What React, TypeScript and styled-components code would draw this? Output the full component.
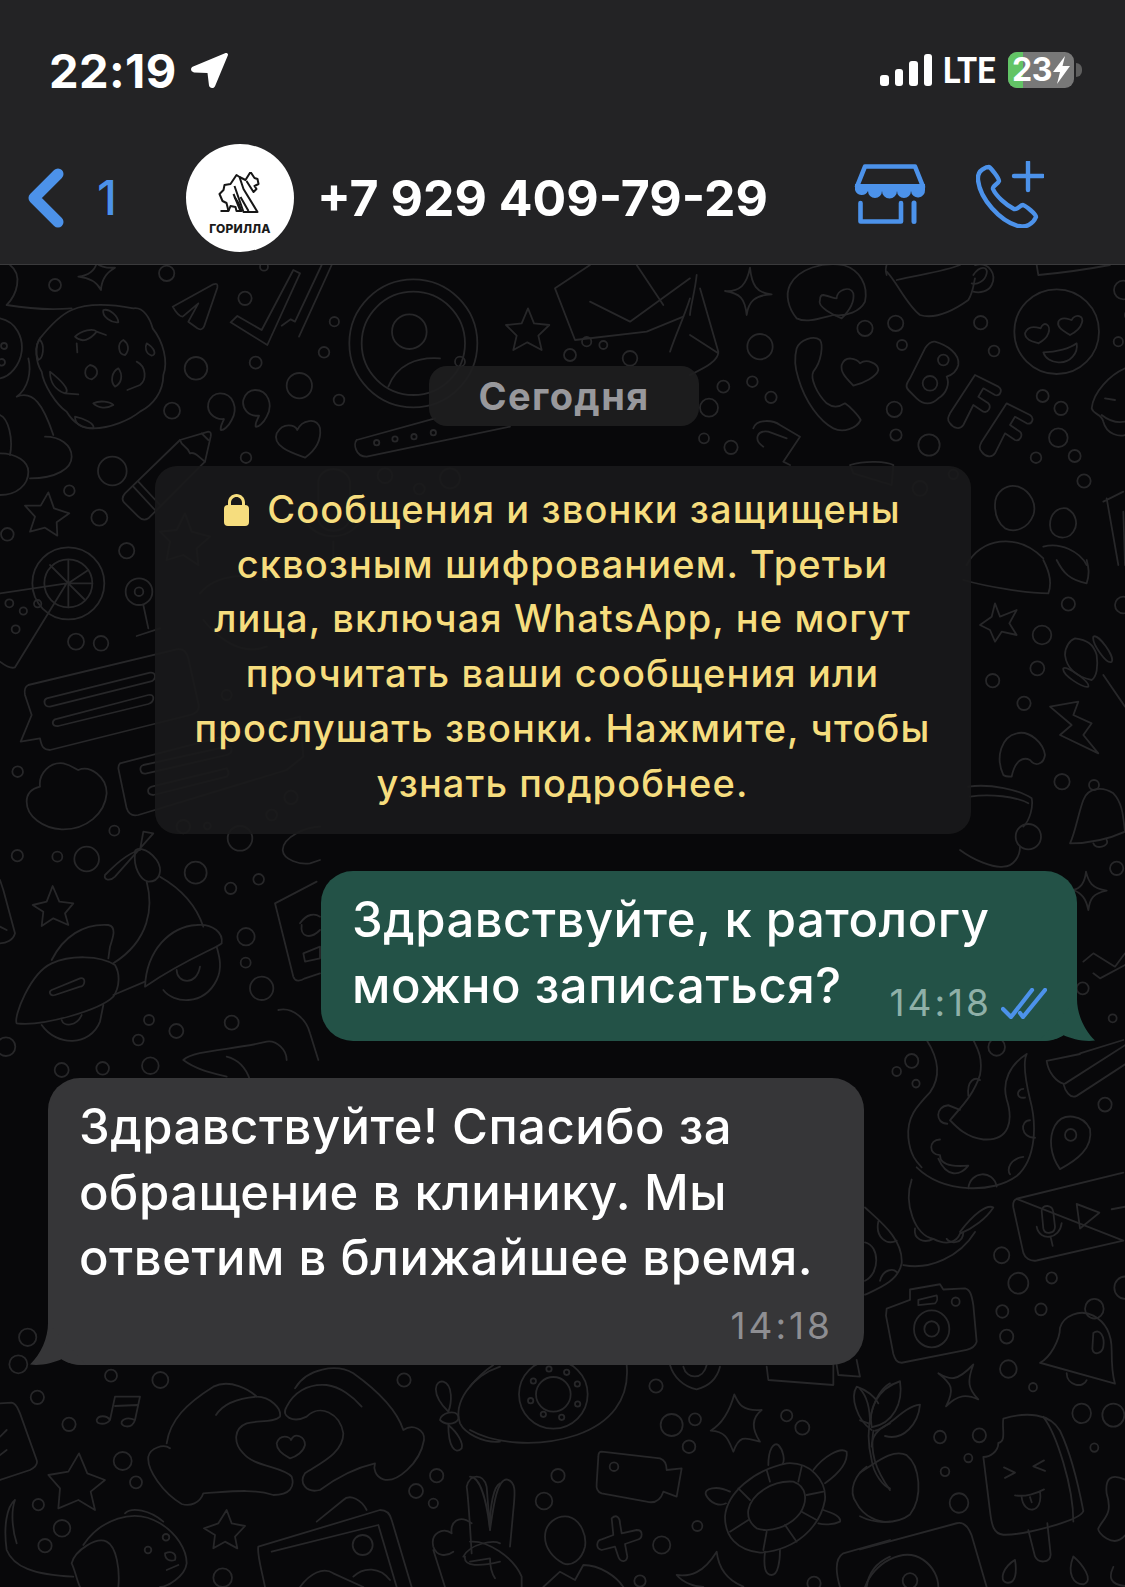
import React from "react";
import styled, { createGlobalStyle } from "styled-components";

const GlobalStyle = createGlobalStyle`
  html, body { margin: 0; padding: 0; background: #08080a; }
  body { font-family: Inter, "Noto Sans", sans-serif; }
`;

const BLUE = "#4c92ea";

const Page = styled.div`
  position: relative;
  width: 1125px;
  height: 1587px;
  overflow: hidden;
  display: flex;
  flex-direction: column;
  background: #08080a;
`;

const Header = styled.header`
  position: relative;
  z-index: 1;
  flex: none;
  height: 265px;
  box-sizing: border-box;
  background: #232325;
  border-bottom: 1px solid #3a3a3c;
`;

const StatusBar = styled.div`
  height: 140px;
  box-sizing: border-box;
  padding: 0 43px 0 49px;
  display: flex;
  align-items: center;
  justify-content: space-between;
`;

const TimeGroup = styled.div`
  display: flex;
  align-items: center;
  gap: 14px;
`;

const Clock = styled.span`
  font-size: 47px;
  font-weight: 700;
  color: #fff;
  line-height: 1;
  letter-spacing: 0.4px;
`;

const StatusIcons = styled.div`
  display: flex;
  align-items: center;
`;

const Signal = styled.div`
  display: flex;
  align-items: flex-end;
  gap: 6px;
  height: 32px;
  margin-left: 2px;
`;

const SignalBar = styled.span<{ $h: number }>`
  width: 8.5px;
  height: ${(p) => p.$h}px;
  border-radius: 3px;
  background: #fff;
`;

const Network = styled.span`
  width: 56px;
  margin-left: 11px;
  font-family: Roboto, sans-serif;
  font-size: 37px;
  font-weight: 700;
  color: #fff;
  line-height: 1;
  transform: scaleX(0.88);
  transform-origin: left center;
  white-space: nowrap;
`;

const Battery = styled.div`
  position: relative;
  width: 66px;
  height: 36px;
  margin-left: 9px;
  border-radius: 9px;
  background: #787878;
  display: flex;
  align-items: center;
  justify-content: center;
  gap: 1px;
`;

const BatteryFill = styled.span`
  position: absolute;
  left: 0;
  top: 0;
  bottom: 0;
  width: 15px;
  border-radius: 9px 0 0 9px;
  background: #62c466;
`;

const BatteryText = styled.span`
  position: relative;
  font-size: 32px;
  font-weight: 700;
  color: #fff;
  line-height: 1;
  letter-spacing: -0.5px;
`;

const BatteryNub = styled.span`
  width: 6px;
  height: 14px;
  margin-left: 2px;
  border-radius: 0 6px 6px 0;
  background: #5e5e5e;
`;

const NavBar = styled.div`
  height: 116px;
  box-sizing: border-box;
  padding: 0 81px 0 28px;
  display: flex;
  align-items: center;
`;

const BackCount = styled.span`
  margin-left: 33px;
  width: 55px;
  font-size: 48px;
  font-weight: 500;
  color: ${BLUE};
  line-height: 1;
`;

const Avatar = styled.div`
  flex: none;
  width: 108px;
  height: 108px;
  margin-left: 34px;
  border-radius: 50%;
  background: #fff;
  display: flex;
  flex-direction: column;
  align-items: center;
  justify-content: center;
  padding-top: 11px;
  box-sizing: border-box;
`;

const AvatarLabel = styled.span`
  margin-top: 10px;
  font-size: 12px;
  font-weight: 800;
  color: #1a1a1a;
  line-height: 1;
  letter-spacing: 0.2px;
`;

const Title = styled.span`
  margin-left: 23px;
  font-size: 50px;
  font-weight: 700;
  color: #fff;
  line-height: 1;
  white-space: nowrap;
`;

const NavActions = styled.div`
  margin-left: auto;
  margin-top: -8px;
  display: flex;
  align-items: center;
  gap: 50px;
`;

const Wallpaper = styled.svg`
  position: absolute;
  left: 0;
  top: 0;
  width: 1125px;
  height: 1587px;
  fill: none;
  stroke: #272729;
  stroke-width: 5.4;
  stroke-linecap: round;
  stroke-linejoin: round;
`;

const Chat = styled.main`
  position: relative;
  flex: 1;
  display: flex;
  flex-direction: column;
  padding: 101px 48px 0;
`;

const DatePill = styled.div`
  align-self: center;
  width: 270px;
  height: 60px;
  margin-left: 3px;
  border-radius: 18px;
  background: rgba(30, 30, 32, 0.92);
  display: flex;
  align-items: center;
  justify-content: center;
  font-size: 38px;
  font-weight: 700;
  letter-spacing: 1.4px;
  color: #98989c;
`;

const SystemNotice = styled.div`
  align-self: center;
  width: 816px;
  box-sizing: border-box;
  margin-top: 40px;
  padding: 16px 0 24px;
  border-radius: 22px;
  background: rgba(26, 26, 27, 0.9);
  text-align: center;
  color: #f6dd7e;
  font-size: 38px;
  font-weight: 500;
  letter-spacing: 1.1px;
  line-height: 54.7px;
`;

const NoticeLine = styled.div`
  white-space: nowrap;
`;

const LockIcon = styled.svg`
  width: 25px;
  height: 33px;
  margin-right: 18px;
  vertical-align: -3px;
  fill: #f6dd7e;
`;

const Bubble = styled.div<{ $out?: boolean }>`
  position: relative;
  box-sizing: border-box;
  width: ${(p) => (p.$out ? 756 : 816)}px;
  margin-top: 37px;
  align-self: ${(p) => (p.$out ? "flex-end" : "flex-start")};
  padding: ${(p) => (p.$out ? "16px 30px 23px 31px" : "16px 31px 21px 31px")};
  border-radius: 32px;
  background: ${(p) => (p.$out ? "#235247" : "#363638")};
  color: #fff;
  font-size: 49px;
  font-weight: 500;
  letter-spacing: 0.5px;
  line-height: 65.5px;
`;

const MessageLine = styled.div`
  white-space: nowrap;
`;

const LastLine = styled.div`
  display: flex;
  justify-content: space-between;
  align-items: flex-end;
  white-space: nowrap;
`;

const Meta = styled.div<{ $out?: boolean }>`
  display: flex;
  align-items: center;
  justify-content: flex-end;
  gap: 9px;
  font-size: 37px;
  font-weight: 400;
  line-height: 36px;
  letter-spacing: 3px;
  color: ${(p) => (p.$out ? "#8fb0a8" : "#8e8e92")};
`;

const InMeta = styled(Meta)`
  margin-top: 17px;
`;

const OutMeta = styled(Meta)`
  margin-bottom: -3px;
`;

const Tail = styled.svg<{ $out?: boolean }>`
  position: absolute;
  bottom: 0;
  width: 56px;
  height: 42px;
  ${(p) => (p.$out ? "right: -18px;" : "left: -18px;")}
  fill: ${(p) => (p.$out ? "#235247" : "#363638")};
`;

type Region = {
  x: number;
  y: number;
  sy?: number;
  c: number[][];
  p: string[];
};

const regions: Region[] = [
  {
    x: 0,
    y: 265,
    c: [
      [165, 60, 18], [500, 25, 23], [735, 100, 20], [1003, 170, 14], [972, 262, 16], [767, 293, 18],
      [588, 310, 34], [898, 362, 38], [1017, 405, 16], [516, 437, 24], [738, 578, 16], [337, 618, 43],
      [208, 677, 16], [298, 758, 24], [22, 808, 19], [380, 857, 23], [792, 5, 12], [1240, 235, 192],
      [1240, 235, 155], [1228, 200, 52], [12, 243, 9], [5, 292, 10], [1130, 533, 8], [1185, 522, 8],
      [1242, 515, 8], [1300, 503, 8], [1155, 632, 22], [1258, 672, 16], [1350, 640, 30],
    ],
    p: [
      "M235 35Q280 30 290 -5Q305 10 345 8Q305 30 303 75Q285 40 235 35Z",
      "M215 135C260 115 320 115 400 130C430 125 450 160 458 190C490 230 505 290 490 330C490 380 460 420 420 440C390 465 330 490 280 490C240 490 215 465 200 440C170 420 130 360 125 320C105 290 105 240 120 220C140 195 180 150 215 135Z",
      "M310 135C330 130 355 155 355 172C335 175 305 155 310 135Z",
      "M225 215C245 195 280 190 290 200C270 225 245 235 225 215ZM230 235L232 262M290 200L318 210",
      "M370 225C385 235 390 255 375 270C355 270 350 235 370 225Z",
      "M440 235C465 250 470 270 455 272C435 265 435 245 440 235Z",
      "M270 300C295 305 300 330 275 343C250 340 250 310 270 300Z",
      "M355 310C370 330 365 355 345 365C330 350 335 320 355 310Z",
      "M410 290C440 305 440 345 420 360L382 375",
      "M150 320C175 340 215 375 195 385C165 375 150 350 150 320ZM195 385L235 388",
      "M280 415C300 405 330 410 340 420C320 432 295 430 280 415Z",
      "M225 455C250 460 285 475 280 490C250 490 225 480 225 455Z",
      "M120 225C135 240 130 280 115 285C105 265 108 240 120 220",
      "M20 120C80 130 160 135 215 130",
      "M30 0C70 30 50 90 20 120",
      "M85 280C95 320 85 370 50 395C100 375 130 420 160 510",
      "M135 515C180 515 215 540 215 575C215 610 170 640 90 640",
      "M0 690C50 690 85 660 85 620C85 590 50 565 0 565",
      "M0 450C25 460 40 520 30 570",
      "M0 160C50 170 70 220 65 260C60 300 30 335 0 340",
      "M518 125L640 58Q655 52 652 68L612 185Q605 198 592 190L565 170L595 115L548 155Q535 155 518 125Z",
      "M692 172L712 153L785 195L880 15L900 25L802 240Z",
      "M845 182L872 163L885 170L965 0M995 0L897 215Z",
      "M660 385C700 385 715 430 695 465C685 485 670 497 662 495C660 480 670 470 672 462C640 465 620 440 625 415C630 395 645 385 660 385Z",
      "M765 375C805 375 820 420 800 455C790 475 775 487 767 485C765 470 775 460 777 452C745 455 725 430 730 405C735 385 750 375 765 375Z",
      "M830 505C850 470 885 480 892 495C905 465 950 455 960 490C965 530 940 560 915 578C880 565 815 545 830 505Z",
      "M1165 365C1190 300 1250 275 1320 280",
      "M1070 525L1305 460M1530 485L1100 575C1065 575 1060 535 1070 525",
      "M540 525L625 500Q635 500 632 515L615 590L445 760Q430 770 415 755L372 712Q362 700 375 685Z",
      "M540 525C545 545 560 540 570 565C585 560 595 575 615 590M605 505L625 525M400 665L465 735M415 650L480 720",
      "M145 682L162 730L208 745L170 772L172 812L135 788L90 800L105 755L75 722L122 722Z",
      "M555 745L575 800L630 815L590 850L595 900L550 870L500 885L510 830L480 800L530 795Z",
      "M955 650C960 600 1040 600 1050 650L1050 760C1040 810 960 810 955 760ZM900 720C910 840 1080 850 1100 720M1000 830L1000 900",
    ],
  },
  {
    x: 430,
    y: 265,
    c: [[420, 270, 18], [470, 230, 14], [90, 290, 15], [600, 280, 22], [520, 240, 12]],
    p: [
      "M294 130L312 175L358 180L325 212L335 255L292 232L250 255L260 212L228 180L275 175Z",
      "M375 70L480 0M375 70L435 225L650 200L760 155M480 110L600 170L780 40M620 0L700 120",
      "M780 100C765 150 740 200 720 260",
    ],
  },
  {
    x: 690,
    y: 265,
    c: [
      [210, 245, 38], [525, 190, 23], [617, 175, 23], [636, 240, 15], [872, 173, 20], [912, 258, 16],
      [1285, 230, 14], [100, 365, 18], [187, 350, 16], [243, 397, 17], [57, 428, 27], [42, 520, 15],
      [123, 547, 20], [613, 433, 23], [618, 510, 17], [717, 540, 32], [1058, 393, 18], [1113, 430, 20],
      [1105, 518, 28], [1038, 578, 16], [1154, 573, 18], [1182, 648, 20], [760, 285, 16], [720, 355, 22],
      [790, 628, 14], [690, 670, 22], [1100, 200, 127], [1300, 75, 28], [1320, 150, 15],
    ],
    p: [
      "M105 78C150 80 170 60 180 8C185 60 200 85 245 88C195 90 175 110 170 150C165 100 150 85 105 78Z",
      "M320 160C295 130 285 90 300 60C325 10 400 -10 460 0C510 15 535 60 525 110C510 140 470 155 430 150C390 160 350 175 320 160Z",
      "M400 90C425 95 430 100 440 100C440 75 480 60 490 85C495 115 475 140 455 160C430 150 380 125 390 105C390 95 395 90 400 90Z",
      "M590 20C620 50 650 120 690 150C740 165 800 130 835 105C850 80 850 60 855 40",
      "M590 30C580 0 600 -20 620 -30M620 45C680 30 760 20 810 0",
      "M855 0C900 -10 920 30 905 60C895 80 870 85 850 80M850 30C870 0 895 5 890 25C885 50 860 60 845 55",
      "M1005 205C1015 175 1050 190 1052 190C1060 165 1085 180 1075 205C1070 220 1055 230 1045 235C1030 230 1005 225 1005 205Z",
      "M1105 170C1115 150 1140 165 1145 165C1155 145 1185 150 1175 175C1170 195 1150 205 1140 210C1125 200 1100 190 1105 170Z",
      "M1060 262C1100 262 1140 250 1160 235C1165 265 1140 295 1105 292C1085 292 1065 280 1060 262Z",
      "M320 250C330 225 370 210 390 225C400 240 395 290 370 320C360 340 380 385 410 415C430 430 450 425 465 415C480 425 505 450 512 465C500 490 460 505 430 490C390 470 345 410 325 340C315 310 312 280 320 250Z",
      "M455 300C465 270 500 280 510 295C530 280 565 295 565 315C560 335 520 355 490 362C475 345 450 325 455 300Z",
      "M735 230C770 240 810 265 805 300C800 320 785 330 770 335C780 355 770 385 745 400C725 420 700 420 680 400L655 375C645 365 650 355 660 340L705 250C715 235 725 228 735 230Z",
      "M855 330L925 365C940 375 930 395 915 390L880 370L865 395L895 415C905 425 895 445 880 440L850 420L820 480C810 495 790 490 780 475C770 465 775 455 780 445Z",
      "M950 415L1020 450C1035 460 1025 480 1010 475L975 455L960 480L990 500C1000 510 990 530 975 525L945 505L915 565C905 580 885 575 875 560C865 550 870 540 875 530Z",
      "M1305 310C1260 330 1210 380 1205 430C1210 450 1235 445 1240 470C1250 510 1290 515 1305 510M1245 400L1275 405M1235 450C1260 470 1280 475 1305 470",
      "M20 30C15 80 0 130 0 150M30 70L85 260C85 290 40 310 0 330M0 210L85 265",
      "M190 490C200 460 250 465 270 480L330 515L280 590L300 600M235 500L290 520M220 545C190 525 200 495 235 500",
      "M915 720C915 680 950 655 985 665C1025 680 1040 720 1030 750C1015 790 975 805 945 790C925 775 915 750 915 720Z",
      "M1080 780C1080 745 1105 725 1130 730C1160 745 1165 780 1150 800C1130 830 1080 820 1080 780Z",
      "M830 900C870 820 980 800 1060 880M1060 845C1110 830 1170 860 1190 900",
      "M1250 700L1285 900M1240 710L1300 680M1300 740L1305 900",
      "M1040 0L1045 30C1100 25 1180 15 1260 0",
      "M480 600C530 585 590 590 610 600L605 660L490 625Z",
    ],
  },
  {
    x: 960,
    y: 560,
    c: [
      [325, 132, 20], [246, 225, 28], [232, 325, 21], [98, 362, 20], [192, 430, 20], [306, 665, 23],
      [402, 675, 15], [470, 925, 20], [205, 830, 38], [490, 135, 25], [368, 1285, 18], [458, 1375, 12],
    ],
    p: [
      "M10 60C80 80 200 100 265 100C280 60 260 20 250 0M290 0C310 40 330 60 380 70C390 40 385 20 380 0",
      "M105 130L120 170L170 150L148 190L170 225L125 215L105 245L90 210L60 195L95 170Z",
      "M345 235C380 240 400 250 410 285C415 320 410 350 395 360C350 350 320 325 315 285C315 260 330 240 345 235Z",
      "M400 230C415 220 465 290 455 305C440 315 395 250 400 230ZM310 325C320 315 390 365 385 380C370 385 305 345 310 325ZM430 345L495 440",
      "M270 440L355 425L340 465L395 490L370 525L415 580L300 525L335 495Z",
      "M130 645C105 590 125 530 170 520C210 510 250 550 255 585C250 615 225 620 210 600C190 590 165 600 155 650C145 650 135 650 130 645Z",
      "M25 680C90 670 180 690 215 715C220 740 210 780 190 800M30 710C90 700 170 710 205 730",
      "M0 870C40 900 100 925 130 920C160 920 180 890 180 860",
      "M330 850C345 820 355 760 370 720C385 680 430 680 460 700C490 730 490 780 495 815C440 840 380 850 330 850ZM400 850C405 870 450 860 440 840",
      "M340 990C365 985 375 965 378 935C385 965 395 985 440 992C400 1000 390 1015 385 1050C378 1015 365 1000 340 990Z",
      "M370 1205L400 1180L465 1220L495 1180M400 1240L420 1255L495 1215",
      "M490 1440L360 1480",
    ],
  },
  {
    x: 0,
    y: 560,
    c: [
      [417, 95, 40], [417, 95, 13], [228, 245, 24], [303, 250, 22], [53, 635, 16], [52, 887, 17], [172, 890, 15],
      [260, 897, 37], [343, 812, 15], [587, 938, 33], [692, 985, 17], [776, 958, 16], [738, 1130, 26],
      [737, 1208, 15], [785, 1285, 35], [695, 1388, 21], [447, 1380, 15], [529, 1413, 21], [415, 1440, 16],
      [18, 1460, 28], [185, 1530, 21], [308, 1525, 19], [451, 1517, 25], [720, 835, 37], [550, 800, 20],
      [622, 798, 10], [815, 765, 16], [873, 712, 20], [680, 405, 15], [205, 70, 108], [205, 70, 72],
      [28, 130, 12], [70, 153, 11], [113, 131, 11], [47, 208, 12],
    ],
    p: [
      "M0 100L200 70L45 322Q30 328 0 305",
      "M205 70L205 0M205 70L265 30M205 70L277 70M205 70L255 120M205 70L205 142M205 70L150 15",
      "M430 135L445 205M410 228L480 205",
      "M85 375L530 268C550 265 560 275 565 295L595 430C600 450 590 460 570 465L150 570C130 570 125 560 120 535L62 545L95 465L75 405C72 390 75 380 85 375Z",
      "M140 415L450 338C470 335 470 360 450 365L150 440C130 440 130 420 140 415Z",
      "M165 478L445 405C465 400 465 425 445 432L175 498C155 500 155 485 165 478Z",
      "M360 610L900 470L910 590L860 630L415 765C395 770 385 760 380 745L355 625C355 615 358 612 360 610Z",
      "M430 615L680 560C700 555 700 580 680 585L440 640C420 645 415 620 430 615Z",
      "M455 680L680 625C690 640 685 645 680 650L460 705C440 705 440 685 455 680Z",
      "M120 680C115 640 150 605 190 610C215 615 230 630 235 630C270 615 320 650 320 700C315 760 260 810 185 808C130 805 80 770 80 725C80 695 100 685 120 680Z",
      "M420 870C380 880 340 920 315 945C310 960 330 965 345 950L460 820L430 815Z",
      "M405 880C400 860 440 860 470 900C490 930 480 965 445 965C420 960 400 920 405 880Z",
      "M480 950C550 990 590 1040 610 1100",
      "M440 965C460 1040 450 1140 340 1210",
      "M435 1280C440 1170 510 1100 590 1095C640 1090 670 1120 665 1150C650 1165 560 1195 435 1280Z",
      "M490 1290C520 1330 610 1340 650 1260C670 1220 655 1180 650 1160",
      "M530 1230C530 1270 590 1280 600 1220",
      "M155 1200C190 1130 250 1090 325 1095C350 1100 340 1130 330 1160L325 1195",
      "M50 1390C40 1370 90 1240 155 1210C210 1185 300 1185 345 1215C360 1240 360 1280 340 1310C300 1350 130 1400 50 1390Z",
      "M155 1290L240 1255C260 1250 255 1280 240 1280L165 1305C150 1310 145 1295 155 1290Z",
      "M340 1305L435 1265",
      "M125 1395C170 1460 270 1460 300 1385L310 1335",
      "M185 1380C190 1400 230 1400 245 1365",
      "M158 978L178 1025L220 1030L195 1060L205 1095L160 1075L125 1098L130 1055L98 1035L140 1025Z",
      "M825 1030L950 965M825 1030L880 1250C885 1265 900 1265 915 1255L960 1240",
      "M900 1090C920 1060 945 1060 960 1070M905 1095C900 1130 930 1140 960 1110M910 1180L960 1160L960 1195L915 1205Z",
      "M0 960L10 990L45 1120C40 1140 20 1150 0 1150M0 1100L20 1110",
      "M835 1350C880 1340 920 1380 930 1420L955 1500",
      "M550 1500C580 1470 700 1470 800 1445C830 1440 860 1470 860 1500M550 1500C590 1530 640 1540 680 1550M680 1490C720 1500 740 1530 750 1560",
      "M960 800C920 800 850 830 848 870C850 900 900 915 930 910L960 900",
      "M600 100C650 40 750 40 800 60M610 180C650 230 720 290 800 260",
    ],
  },
  {
    x: 860,
    y: 1040,
    sy: 1 / 2.866,
    c: [
      [155, 60, 20], [110, 90, 13], [168, 125, 11], [410, 20, 25], [735, 185, 20], [632, 272, 17], [425, 617, 23],
      [475, 697, 30], [575, 682, 16], [427, 778, 18], [543, 772, 17], [440, 850, 20], [445, 943, 25], [519, 995, 12],
      [665, 1070, 28], [760, 1075, 33], [703, 1168, 12], [240, 1138, 18], [358, 1133, 20], [325, 1198, 12],
      [255, 1237, 13], [297, 1327, 28], [703, 770, 28], [215, 828, 53], [215, 828, 22], [287, 750, 12], [150, 1550, 22],
      [795, 710, 32],
    ],
    p: [
      "M80 770L150 745L150 715L240 700L250 715L315 712C330 715 335 730 340 760L350 865C345 880 335 885 320 888L125 925C110 925 105 915 100 900L78 790Z",
      "M175 745L230 732C235 745 230 750 225 755L175 760Z",
      "M170 365C250 440 400 440 470 390C530 340 530 240 510 170C495 110 490 60 500 40C450 70 425 120 440 170C460 230 450 290 370 285C320 280 290 250 270 230C300 195 340 160 360 100C370 50 350 20 340 0",
      "M200 0C240 60 240 110 210 150C170 190 140 220 145 280C150 330 170 350 185 365",
      "M325 160C320 115 345 105 360 115",
      "M262 240C225 240 225 190 265 187L300 200",
      "M240 285C205 285 205 330 240 330C240 370 320 360 325 360C300 390 260 395 235 340",
      "M155 400C130 470 165 560 220 570C260 590 290 580 300 555C340 540 380 510 400 480C380 470 340 500 300 550",
      "M165 540C160 570 190 585 220 570M260 570C270 585 310 585 310 550",
      "M490 140C470 140 465 170 495 165",
      "M510 230C480 230 480 280 525 280",
      "M490 335C450 340 440 370 450 385",
      "M325 425C330 375 400 370 410 420",
      "M130 645C210 660 300 620 345 550",
      "M15 480C60 520 130 570 125 640C115 690 60 710 15 730M55 520C45 565 80 590 110 575M60 690C70 655 100 655 110 665M15 580C60 590 60 670 15 690",
      "M600 370C570 330 565 280 585 245C610 205 670 215 690 255C700 310 650 345 600 370Z",
      "M470 455L790 380M790 575L530 632C510 635 495 625 490 610L460 480C458 465 462 458 470 455Z",
      "M545 490C545 470 580 470 580 495L585 535C585 555 555 560 550 540ZM530 535C540 580 600 570 605 525M572 565L578 590",
      "M650 470L718 495L660 540ZM755 485L795 478",
      "M560 60L660 40M560 60C565 95 590 120 610 125C615 145 630 170 650 160L795 70M615 125L795 15",
      "M540 925C570 910 600 860 600 825C610 790 660 770 700 790C740 810 755 850 755 890C755 930 760 970 765 985Z",
      "M700 840C720 825 735 850 730 880C725 900 700 905 697 885Z",
      "M620 955C620 990 670 1000 680 975",
      "M235 955C270 975 290 980 340 930C320 980 325 1000 355 1030C320 1015 295 1015 258 1050C285 1000 275 985 235 955Z",
      "M35 1110C25 1060 50 1000 120 978C130 1040 100 1100 35 1110Z",
      "M45 1120C90 1110 130 1050 180 1045C175 1100 130 1150 75 1135",
      "M40 1120C30 1180 45 1230 90 1290",
      "M0 1000C20 1020 30 1050 30 1100L0 1090",
      "M0 1240C50 1210 100 1170 140 1190C180 1220 190 1310 150 1360C110 1390 40 1385 0 1365",
      "M430 1085C500 1065 570 1070 600 1120C640 1200 660 1300 670 1350C660 1380 480 1420 430 1418C400 1415 395 1390 390 1350L370 1195C390 1195 415 1180 415 1155C440 1150 425 1115 430 1085Z",
      "M550 1080C590 1130 640 1280 640 1380",
      "M505 1405L525 1480C535 1500 570 1500 572 1475L562 1385",
      "M432 1225L465 1240L435 1255M552 1205L520 1222L555 1235",
      "M465 1305C495 1310 530 1300 552 1288M485 1310C490 1360 550 1360 540 1295M510 1310L515 1325",
      "M465 1490C430 1510 415 1550 440 1555C470 1560 470 1520 465 1490Z",
      "M640 1480C620 1530 640 1560 670 1560C705 1550 665 1500 640 1480Z",
      "M760 1510C745 1540 750 1560 795 1565",
      "M0 1460L290 1385C310 1380 325 1395 335 1420L380 1568",
      "M15 1568C40 1500 130 1450 190 1490C220 1510 235 1540 235 1568",
      "M795 1420C760 1460 710 1410 715 1400C730 1370 760 1360 740 1300C735 1260 750 1240 795 1260",
    ],
  },
  {
    x: 0,
    y: 1280,
    c: [
      [83, 172, 26], [55, 253, 27], [333, 287, 18], [481, 300, 24], [112, 352, 20], [207, 433, 20], [368, 543, 27],
      [408, 607, 18], [115, 674, 17], [186, 745, 25], [135, 797, 20], [1212, 300, 20], [1310, 587, 20], [1248, 633, 21],
      [1300, 670, 14], [668, 893, 28], [1088, 795, 30], [444, 810, 10], [498, 772, 10],
    ],
    p: [
      "M330 420L345 350L420 350L405 420C395 450 360 440 365 425C375 410 395 415 405 420M345 378L412 375M330 420C320 435 290 435 290 420C295 405 320 405 330 420",
      "M500 490C510 420 560 370 640 320C690 295 750 330 770 350C810 350 845 385 840 410C820 430 770 420 740 430C700 445 700 490 730 520C760 560 850 560 875 590C885 620 870 645 820 645C760 625 690 635 610 640C600 670 570 680 545 672C490 640 440 570 445 530C450 505 490 490 510 505",
      "M648 405C670 370 710 355 770 350",
      "M830 490C840 460 870 470 873 480C885 455 915 470 915 495C910 515 890 530 870 535C850 525 830 510 830 490Z",
      "M885 325C920 265 1010 250 1060 280C1130 330 1190 390 1210 450C1240 430 1275 450 1272 480C1260 550 1190 610 1150 598C1125 590 1120 565 1125 550C1060 565 1000 600 960 630C920 640 895 610 915 580C960 550 1030 520 1030 460C1020 400 960 370 920 410C880 430 840 410 860 380C880 340 920 310 980 315C1020 320 1060 350 1085 380",
      "M1345 395C1290 340 1305 300 1330 305C1360 315 1355 370 1345 395ZM1345 435C1375 460 1390 490 1385 505C1365 525 1345 500 1345 435ZM1320 420C1320 400 1370 385 1375 410C1380 430 1340 440 1320 420Z",
      "M1500 260C1410 290 1360 370 1380 430C1395 460 1450 490 1500 485",
      "M237 520L262 580L315 600L272 635L285 690L235 660L175 685L180 625L145 585L205 575Z",
      "M680 690L695 730L735 738L705 770L712 805L675 785L640 805L645 765L612 745L655 730Z",
      "M0 370L35 368C50 370 55 390 60 400L110 540C115 555 100 565 90 570L0 600M20 450L0 470M20 510L0 525",
      "M250 795C300 720 400 680 480 730C530 760 560 810 560 850C555 890 500 921 480 921",
      "M375 700C395 680 450 690 490 725",
      "M215 850C225 810 290 770 320 785C350 800 360 870 355 921M215 850C225 870 230 900 240 921",
      "M495 820C520 810 530 825 525 840C510 845 495 840 495 820ZM500 870L535 855",
      "M45 660C20 680 10 740 20 810C40 860 100 885 220 890M45 660C30 700 40 760 50 790",
      "M775 800L1140 690C1160 690 1170 700 1175 720L1235 921M775 800C770 820 785 870 795 921",
      "M815 815L1135 735L1190 921",
      "M950 725L1030 660C1050 640 1085 660 1100 690",
      "M900 921C930 880 970 860 1000 880L1090 921M1060 890C1090 860 1140 860 1170 900",
      "M1415 820C1410 740 1405 650 1400 620C1410 580 1450 580 1460 620L1470 750M1470 740C1470 680 1480 620 1500 610",
      "M1415 730C1375 700 1350 730 1355 760C1330 740 1290 760 1300 800C1310 830 1340 830 1360 815M1390 830C1410 790 1480 780 1500 790M1300 810L1335 921M1395 830C1390 860 1440 860 1500 845",
    ],
  },
  {
    x: 470,
    y: 1360,
    c: [
      [558, 78, 20], [605, 195, 33], [675, 178, 18], [657, 260, 19], [950, 167, 17], [997, 203, 21], [264, 347, 20],
      [222, 423, 25], [682, 498, 15], [575, 555, 26], [510, 663, 17], [250, 103, 52], [250, 103, 103], [190, 63, 8],
      [237, 27, 8], [290, 37, 8], [322, 72, 8], [323, 132, 8], [275, 172, 8], [220, 163, 8], [182, 122, 8], [432, 320, 13],
      [1032, 670, 20],
    ],
    p: [
      "M0 210C70 250 200 265 320 225C420 190 480 120 470 15M0 80C20 55 40 35 70 15",
      "M600 15C610 50 640 80 680 88C710 80 740 60 750 20M640 20C650 60 700 60 710 15",
      "M890 20L895 60L1090 75L1090 15M1100 15L1105 45L1170 50L1160 0",
      "M793 103C805 130 815 155 875 150C850 170 840 200 870 245C830 235 810 220 790 275C775 240 770 215 722 212C760 190 780 150 793 103Z",
      "M1205 210C1160 180 1140 110 1160 80C1190 90 1215 110 1225 130M1260 70C1210 100 1180 200 1205 300C1210 340 1240 380 1260 385M1260 190C1225 205 1205 230 1205 260M1190 320C1160 340 1130 390 1160 430C1180 470 1230 490 1260 485",
      "M395 275L570 295C585 300 590 315 590 330L635 325L620 410L580 395C570 425 550 430 530 425L395 400C380 395 378 385 380 370L385 290C385 280 390 275 395 275Z",
      "M765 470C770 400 850 330 950 310C1020 305 1070 360 1065 420C1050 500 980 570 870 578C800 570 765 530 765 470Z",
      "M835 450C845 400 910 360 970 365C1010 380 1015 420 990 460C960 500 900 520 860 505C840 490 832 470 835 450Z",
      "M900 365L890 330M985 365L995 320M1010 405L1060 395M995 455L1040 480M945 495L980 545M890 515L880 570M835 480L780 515M840 420L805 385",
      "M1030 330C1060 290 1110 260 1130 275C1135 310 1100 345 1065 370",
      "M780 395C740 375 700 385 708 405C720 430 750 440 768 430M895 315C895 270 910 245 925 255C940 270 945 300 938 312M1060 450C1090 460 1115 470 1110 485C1090 495 1060 495 1045 490M885 575C880 620 885 645 905 645C925 645 930 600 930 570",
      "M225 530C225 490 260 465 295 470C335 480 350 530 345 560C335 600 305 620 280 610C250 595 225 565 225 530Z",
      "M425 475C440 460 450 475 450 490L455 520L500 510C520 510 520 535 500 540L465 552L472 590C470 610 450 605 445 590L435 560L395 570C375 565 380 540 395 538L430 525Z",
      "M0 350C30 350 50 420 60 510C70 440 80 360 110 358C140 365 135 400 130 450L120 560M0 545C50 540 130 590 155 650L155 681M0 605L60 595C60 620 65 640 75 655",
      "M620 645C660 650 700 640 740 575C745 620 770 660 820 680M620 645C640 670 680 681 700 681",
      "M220 681L270 635L315 660L340 615C390 615 440 650 460 681",
      "M1260 540L1120 580C1095 595 1095 630 1110 681M1260 590C1215 610 1195 640 1190 681",
    ],
  },
];

const DoodleWallpaper = () => (
  <Wallpaper viewBox="0 0 1125 1587" aria-hidden="true">
    {regions.map((r, i) => (
      <g key={i} transform={`translate(${r.x} ${r.y}) scale(${1 / 3} ${r.sy ?? 1 / 3})`}>
        {r.c.map(([cx, cy, rad], j) => (
          <circle key={j} cx={cx} cy={cy} r={rad} />
        ))}
        {r.p.map((d, j) => (
          <path key={j} d={d} />
        ))}
      </g>
    ))}
  </Wallpaper>
);

const LocationArrow = () => (
  <svg width="37" height="37" viewBox="0 0 37 37" fill="#fff">
    <path d="M34 1.2C36 .2 37.6 1.8 36.800 3.600L24 34.200C22.700 37 18.500 36.600 18 33.600L16.500 21 3 20.400C-.4 19.800-.9 16.200 1.600 14.800Z" />
  </svg>
);

const BoltSvg = styled.svg`
  position: relative;
  fill: #fff;
`;

const BoltIcon = () => (
  <BoltSvg width="17" height="28" viewBox="0 0 17 28">
    <path d="M12 0 0 16h7L4 28 17 10H9.500Z" />
  </BoltSvg>
);

const BackChevron = () => (
  <svg width="36" height="60" viewBox="0 0 36 60" fill="none" stroke={BLUE} strokeWidth="11" strokeLinecap="round" strokeLinejoin="round">
    <path d="M30 6 6 30l24 24" />
  </svg>
);

const GorillaMark = () => (
  <svg width="45" height="41" viewBox="0 0 44 41" fill="none" stroke="#161616" strokeWidth="2" strokeLinejoin="round">
    <path d="M2 39h8l2-5 5 1 1 4h5l-3-8-4-6" />
    <path d="M10 39 8 31 4 29 1 22l4-4 1-5 6-1 6-9 3 2 4 12 14 23H25L16 14" />
    <path d="M21 5l6 3 5-8 4 6 3 1 1 5-4 2 2 3-3 3L28 9" />
    <path d="M22 39l-7-17M30 39l-8-14" />
  </svg>
);

const StoreIcon = () => (
  <svg width="72" height="60" viewBox="0 0 72 60" fill="none" stroke={BLUE} strokeWidth="4.6" strokeLinecap="round" strokeLinejoin="round">
    <path d="M11 2.500h50l8 20H3z" />
    <path
      d="M1 20h70v6a7 7 0 0 1-14 1 7 7 0 0 1-14 0 7 7 0 0 1-15 0 7 7 0 0 1-14 0 7 7 0 0 1-13-1z"
      fill={BLUE}
      stroke="none"
    />
    <path d="M6.500 39v18.500H47V39" />
    <path d="M60 39v18.500" strokeWidth="5" />
  </svg>
);

const CallAddIcon = () => (
  <svg width="68" height="67" viewBox="0 0 68 67" fill="none" stroke={BLUE} strokeWidth="4.4" strokeLinecap="round" strokeLinejoin="round">
    <path d="M38 15h29M52 1v28" />
    <path d="M9 7C4 9 1.500 13 2 19 4 38 24 60 42 65c8 2 15-2 18-9 0-3-10-11-13-12-3 0-5 5-9 4-8-4-18-13-21-20-1-3 5-5 6-8 0-3-8-13-10-14-1 0-3 0-4 1Z" />
  </svg>
);

const LockGlyph = () => (
  <LockIcon viewBox="0 0 25 33">
    <path d="M4 13V9.500C4 4.500 8 1 12.500 1S21 4.500 21 9.500V13h-3V9.500C18 6.500 15.500 4 12.500 4S7 6.500 7 9.500V13Z" />
    <rect x="0" y="12" width="25" height="21" rx="4" />
  </LockIcon>
);

const DoubleTick = () => (
  <svg width="46" height="31" viewBox="0 0 46 31" fill="none" stroke={BLUE} strokeWidth="4.2" strokeLinecap="round" strokeLinejoin="round">
    <path d="M2 21l8 8L31 2" />
    <path d="M19 25l3 4L44 2" />
  </svg>
);

const notice = [
  "сквозным шифрованием. Третьи",
  "лица, включая WhatsApp, не могут",
  "прочитать ваши сообщения или",
  "прослушать звонки. Нажмите, чтобы",
  "узнать подробнее.",
];

export default function App() {
  return (
    <Page>
      <GlobalStyle />
      <DoodleWallpaper />
      <Header>
        <StatusBar>
          <TimeGroup>
            <Clock>22:19</Clock>
            <LocationArrow />
          </TimeGroup>
          <StatusIcons>
            <Signal>
              <SignalBar $h={11} />
              <SignalBar $h={17} />
              <SignalBar $h={25} />
              <SignalBar $h={32} />
            </Signal>
            <Network>LTE</Network>
            <Battery>
              <BatteryFill />
              <BatteryText>23</BatteryText>
              <BoltIcon />
            </Battery>
            <BatteryNub />
          </StatusIcons>
        </StatusBar>
        <NavBar>
          <BackChevron />
          <BackCount>1</BackCount>
          <Avatar>
            <GorillaMark />
            <AvatarLabel>ГОРИЛЛА</AvatarLabel>
          </Avatar>
          <Title>+7 929 409-79-29</Title>
          <NavActions>
            <StoreIcon />
            <CallAddIcon />
          </NavActions>
        </NavBar>
      </Header>
      <Chat>
        <DatePill>Сегодня</DatePill>
        <SystemNotice>
          <NoticeLine>
            <LockGlyph />
            Сообщения и звонки защищены
          </NoticeLine>
          {notice.map((line) => (
            <NoticeLine key={line}>{line}</NoticeLine>
          ))}
        </SystemNotice>
        <Bubble $out>
          <MessageLine>Здравствуйте, к ратологу</MessageLine>
          <LastLine>
            можно записаться?
            <OutMeta $out>
              14:18
              <DoubleTick />
            </OutMeta>
          </LastLine>
          <Tail $out viewBox="0 0 56 42">
            <path d="M38 0C38 15 45 31 56 41.500 45 43 33 40 24 36 18 40 11 42 0 42Z" />
          </Tail>
        </Bubble>
        <Bubble>
          <MessageLine>Здравствуйте! Спасибо за</MessageLine>
          <MessageLine>обращение в клинику. Мы</MessageLine>
          <MessageLine>ответим в ближайшее время.</MessageLine>
          <InMeta>14:18</InMeta>
          <Tail viewBox="0 0 56 42">
            <path d="M18 0C18 15 11 31 0 41.500 11 43 23 40 32 36 38 40 45 42 56 42Z" />
          </Tail>
        </Bubble>
      </Chat>
    </Page>
  );
}
